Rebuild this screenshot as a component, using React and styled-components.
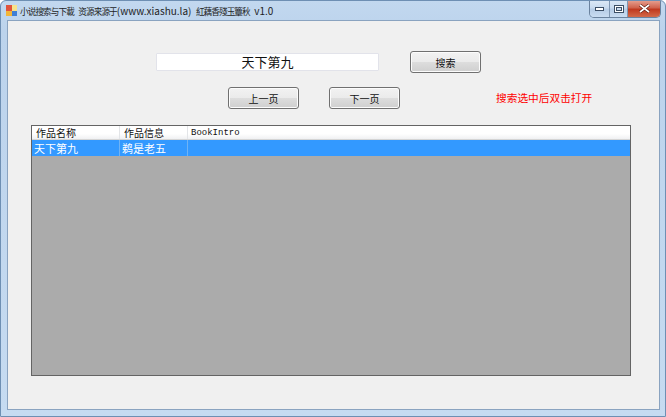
import styled, { createGlobalStyle } from "styled-components";

const Global = createGlobalStyle`
  html, body { margin: 0; padding: 0; background: #ffffff; }
  body { font-family: "Noto Sans CJK SC", "Noto Sans", sans-serif; }
`;

const Window = styled.div`
  width: 666px;
  height: 417px;
  box-sizing: border-box;
  display: flex;
  flex-direction: column;
  background: linear-gradient(#c2d8ef, #bcd3ec 30px, #c6dbf1);
  border: 1px solid #6e8fb3;
  border-radius: 6px 6px 0 0;
  padding: 0 5px 6px 6px;
  overflow: hidden;
`;

const TitleBar = styled.div`
  height: 19px;
  display: flex;
  align-items: flex-start;
`;

const TitleText = styled.span`
  font-size: 10px;
  line-height: 14px;
  margin-top: 3px;
  margin-left: 3px;
  color: #1e1e1e;
  white-space: nowrap;
`;

const Cjk = styled.span`
  font-size: 8.6px;
  letter-spacing: -0.9px;
`;

const AppIcon = styled.svg`
  margin-top: 4px;
  margin-left: -1px;
  flex: none;
`;

const Controls = styled.div`
  margin-left: auto;
  margin-right: -1px;
  margin-top: -1px;
  display: flex;
  height: 17px;
  border: 1px solid #6a829e;
  border-top: none;
  border-radius: 0 0 5px 5px;
  overflow: hidden;
`;

const Ctl = styled.div`
  width: ${(p) => p.$w}px;
  display: flex;
  align-items: center;
  justify-content: center;
  background: ${(p) =>
    p.$close
      ? "linear-gradient(#e8a595, #d0644e 45%, #c0391f 55%, #d36a4a)"
      : "linear-gradient(#dde9f6, #c9dbef 45%, #b6cce6 55%, #c9dcf1)"};
  border-left: ${(p) => (p.$first ? "none" : "1px solid #7f97b3")};
`;

const Client = styled.div`
  flex: 1;
  background: #f0f0f0;
  border: 1px solid #8aa3c0;
  display: flex;
  flex-direction: column;
  padding-top: 30px;
`;

const Row = styled.div`
  display: flex;
  align-items: center;
  margin-left: ${(p) => p.$left}px;
  gap: ${(p) => p.$gap}px;
  margin-top: ${(p) => p.$top || 0}px;
`;

const TextBox = styled.div`
  width: 223px;
  height: 18px;
  box-sizing: border-box;
  background: #ffffff;
  border: 1px solid #e2e3ea;
  border-radius: 1px;
  font-size: 13px;
  line-height: 16px;
  text-align: center;
  color: #111;
`;

const Button = styled.div`
  width: 71px;
  height: 22px;
  box-sizing: border-box;
  border: 1px solid #707070;
  border-radius: 3px;
  background: linear-gradient(#f2f2f2, #ebebeb 48%, #dddddd 52%, #cfcfcf);
  box-shadow: inset 0 0 0 1px #fcfcfc;
  display: flex;
  align-items: center;
  justify-content: center;
  font-size: 10px;
  color: #111;
`;

const Hint = styled.span`
  color: #ff0000;
  font-size: 10.7px;
  margin-left: 66px;
  margin-top: -1px;
`;

const ListView = styled.div`
  margin-left: 23px;
  margin-top: 16px;
  width: 600px;
  height: 251px;
  box-sizing: border-box;
  border: 1px solid #646464;
  background: #ababab;
  display: flex;
  flex-direction: column;
`;

const HeaderRow = styled.div`
  display: flex;
  height: 13px;
  background: linear-gradient(#ffffff, #ffffff 60%, #f0f1f3);
  border-bottom: 1px solid #d5d5d5;
`;

const Cell = styled.div`
  width: ${(p) => p.$w}px;
  flex: ${(p) => (p.$w ? "none" : 1)};
  box-sizing: border-box;
  padding-left: ${(p) => p.$pad}px;
  border-right: ${(p) => (p.$w ? `1px solid ${p.$sep}` : "none")};
  font-size: ${(p) => (p.$mono ? 9 : p.$size || 11)}px;
  font-family: ${(p) =>
    p.$mono ? '"Liberation Mono", monospace' : '"Noto Sans CJK SC", sans-serif'};
  color: ${(p) => p.$color};
  white-space: nowrap;
  display: flex;
  align-items: center;
`;

const DataRow = styled.div`
  display: flex;
  height: 16px;
  background: #3399ff;
`;

const columns = [
  { title: "作品名称", w: 88, pad: 4 },
  { title: "作品信息", w: 68, pad: 4 },
  { title: "BookIntro", pad: 3, mono: true },
];

const rows = [["天下第九", "鹈是老五", ""]];

export default function App() {
  return (
    <Window>
      <Global />
      <TitleBar>
        <AppIcon width="11" height="11" viewBox="0 0 11 11">
          <rect x="0" y="0" width="11" height="11" fill="#f4d26a" />
          <rect x="0" y="0" width="6" height="6" fill="#e0533b" />
          <rect x="6" y="6" width="5" height="5" fill="#3f7fd6" />
          <rect x="0" y="6" width="6" height="5" fill="#f2b63a" />
          <rect x="6" y="0" width="5" height="6" fill="#f7e28a" />
        </AppIcon>
        <TitleText>
          <Cjk>小说搜索与下載</Cjk>&nbsp;&nbsp;<Cjk>资源来源于</Cjk>(www.xiashu.la)&nbsp;&nbsp;
          <Cjk>紅藕香殘玉簟秋</Cjk>&nbsp;&nbsp;v1.0
        </TitleText>
        <Controls>
          <Ctl $w={19} $first>
            <svg width="9" height="4" viewBox="0 0 9 4">
              <rect x="0.5" y="0.5" width="8" height="3" fill="#fff" stroke="#3d4f66" />
            </svg>
          </Ctl>
          <Ctl $w={17}>
            <svg width="10" height="8" viewBox="0 0 10 8">
              <rect x="0.5" y="0.5" width="9" height="7" fill="#fff" stroke="#3d4f66" />
              <rect x="2.5" y="2.5" width="5" height="3" fill="#c9dbef" stroke="#3d4f66" />
            </svg>
          </Ctl>
          <Ctl $w={32} $close>
            <svg width="11" height="9" viewBox="0 0 11 9">
              <path d="M1 1 L10 8 M10 1 L1 8" stroke="#5a1a10" strokeWidth="3" />
              <path d="M1 1 L10 8 M10 1 L1 8" stroke="#ffffff" strokeWidth="1.6" />
            </svg>
          </Ctl>
        </Controls>
      </TitleBar>
      <Client>
        <Row $left={148} $gap={31}>
          <TextBox>天下第九</TextBox>
          <Button>搜索</Button>
        </Row>
        <Row $left={220} $gap={30} $top={14}>
          <Button>上一页</Button>
          <Button>下一页</Button>
          <Hint>搜索选中后双击打开</Hint>
        </Row>
        <ListView>
          <HeaderRow>
            {columns.map((c) => (
              <Cell key={c.title} $w={c.w} $pad={c.pad} $mono={c.mono} $size={10} $color="#111" $sep="#e3e5e8">
                {c.title}
              </Cell>
            ))}
          </HeaderRow>
          {rows.map((r, i) => (
            <DataRow key={i}>
              {r.map((v, j) => (
                <Cell key={j} $w={columns[j].w} $pad={2} $color="#ffffff" $sep="#6fb3f5">
                  {v}
                </Cell>
              ))}
            </DataRow>
          ))}
        </ListView>
      </Client>
    </Window>
  );
}
